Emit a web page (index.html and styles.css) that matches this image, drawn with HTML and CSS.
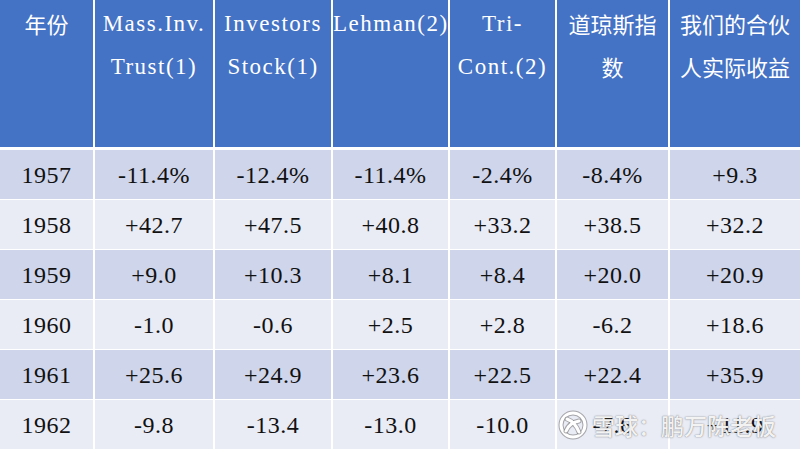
FILE: index.html
```html
<!DOCTYPE html>
<html lang="zh">
<head>
<meta charset="utf-8">
<title>收益对比</title>
<link rel="stylesheet" href="styles.css">
</head>
<body>
<div class="page">
  <div class="table">
    <div class="th cjk">年份</div>
    <div class="th lat">Mass.Inv.<br>Trust(1)</div>
    <div class="th lat">Investors<br>Stock(1)</div>
    <div class="th lat">Lehman(2)</div>
    <div class="th lat">Tri-<br>Cont.(2)</div>
    <div class="th cjk">道琼斯指<br>数</div>
    <div class="th cjk">我们的合伙<br>人实际收益</div>

    <div class="td odd">1957</div><div class="td odd">-11.4%</div><div class="td odd">-12.4%</div><div class="td odd">-11.4%</div><div class="td odd">-2.4%</div><div class="td odd">-8.4%</div><div class="td odd">+9.3</div>
    <div class="td even">1958</div><div class="td even">+42.7</div><div class="td even">+47.5</div><div class="td even">+40.8</div><div class="td even">+33.2</div><div class="td even">+38.5</div><div class="td even">+32.2</div>
    <div class="td odd">1959</div><div class="td odd">+9.0</div><div class="td odd">+10.3</div><div class="td odd">+8.1</div><div class="td odd">+8.4</div><div class="td odd">+20.0</div><div class="td odd">+20.9</div>
    <div class="td even">1960</div><div class="td even">-1.0</div><div class="td even">-0.6</div><div class="td even">+2.5</div><div class="td even">+2.8</div><div class="td even">-6.2</div><div class="td even">+18.6</div>
    <div class="td odd">1961</div><div class="td odd">+25.6</div><div class="td odd">+24.9</div><div class="td odd">+23.6</div><div class="td odd">+22.5</div><div class="td odd">+22.4</div><div class="td odd">+35.9</div>
    <div class="td even">1962</div><div class="td even">-9.8</div><div class="td even">-13.4</div><div class="td even">-13.0</div><div class="td even">-10.0</div><div class="td even">-7.6</div><div class="td even">+11.9</div>
  </div>

  <div class="watermark">
    <svg class="wm-logo" width="30" height="30" viewBox="0 0 30 30">
      <circle cx="15" cy="15" r="12" fill="none" stroke="rgba(110,110,110,0.55)" stroke-width="5"/>
      <circle cx="15" cy="15" r="12" fill="none" stroke="#ffffff" stroke-width="3"/>
      <path d="M9 9 Q17 12 21 22" fill="none" stroke="rgba(110,110,110,0.55)" stroke-width="5" stroke-linecap="round"/>
      <path d="M8 21 Q11 13 21 11" fill="none" stroke="rgba(110,110,110,0.55)" stroke-width="5" stroke-linecap="round"/>
      <path d="M9 9 Q17 12 21 22" fill="none" stroke="#ffffff" stroke-width="3" stroke-linecap="round"/>
      <path d="M8 21 Q11 13 21 11" fill="none" stroke="#ffffff" stroke-width="3" stroke-linecap="round"/>
    </svg>
    <span class="wm-text">雪球：鹏万陈老板</span>
  </div>
</div>
</body>
</html>
```

FILE: styles.css
```css
html, body {
  margin: 0;
  padding: 0;
  background: #ffffff;
}

.page {
  position: relative;
  width: 800px;
  height: 450px;
  overflow: hidden;
}

.table {
  display: grid;
  grid-template-columns: 93px 118px 116px 115px 105px 111px 130px;
  grid-template-rows: 149px repeat(6, 49px);
  column-gap: 2px;
  row-gap: 1px;
  background: #ffffff;
  width: 800px;
  height: 450px;
}

.th {
  background: #4472c4;
  color: #ffffff;
  text-align: center;
  margin-bottom: 2px;
  padding-top: 2px;
  font-size: 22px;
  line-height: 43px;
  white-space: nowrap;
}

.th.cjk {
  font-family: "Noto Sans CJK SC", "Noto Sans", sans-serif;
  font-size: 22px;
}

.th.lat {
  font-family: "Liberation Serif", serif;
  font-size: 23px;
  letter-spacing: 1.5px;
}

.td {
  display: flex;
  align-items: center;
  justify-content: center;
  font-family: "Liberation Serif", "Noto Sans CJK SC", serif;
  font-size: 24px;
  letter-spacing: 0.5px;
  color: #111111;
  padding-top: 2px;
  box-sizing: border-box;
}

.odd {
  background: #cfd5ea;
}

.even {
  background: #e9ebf5;
}

.watermark {
  position: absolute;
  left: 558px;
  top: 408px;
  display: flex;
  align-items: center;
  gap: 4px;
}

.wm-logo {
  display: block;
}

.wm-text {
  font-family: "Noto Sans CJK SC", sans-serif;
  font-size: 23px;
  font-weight: 500;
  color: rgba(255, 255, 255, 0.92);
  text-shadow: 0 0 1px rgba(90, 90, 90, 0.7), 0 0 2px rgba(90, 90, 90, 0.4);
}
```
